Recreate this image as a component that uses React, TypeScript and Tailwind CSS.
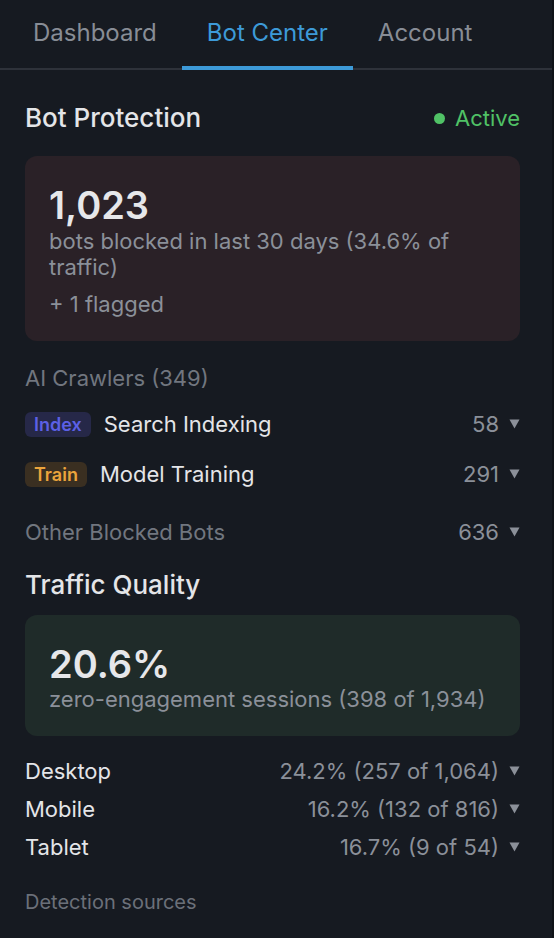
import React from 'react';

const Caret = () => (
  <svg width="11" height="10" viewBox="0 0 11 10" className="ml-[10px] shrink-0">
    <path d="M0.5 0.5h10L5.5 9.5z" fill="#8b9099" />
  </svg>
);

const tabs = ['Dashboard', 'Bot Center', 'Account'];

const crawlers = [
  { badge: 'Index', label: 'Search Indexing', count: 58, tone: 'bg-[#262848] text-[#5c60e6]' },
  { badge: 'Train', label: 'Model Training', count: 291, tone: 'bg-[#3a2f21] text-[#eba43c]' },
];

const devices = [
  { name: 'Desktop', value: '24.2% (257 of 1,064)' },
  { name: 'Mobile', value: '16.2% (132 of 816)' },
  { name: 'Tablet', value: '16.7% (9 of 54)' },
];

export default function App() {
  return (
    <div className="flex min-h-[938px] w-full bg-[#161a21] font-['Inter','Noto_Sans',sans-serif] text-[#e4e5e8]">
      <div className="min-w-0 flex-1">
        {/* Tabs */}
        <nav className="flex h-[70px] border-b-2 border-[#2e323a] pl-2">
          {tabs.map((t) => {
            const active = t === 'Bot Center';
            return (
              <div
                key={t}
                className={`-mb-[2px] flex h-[70px] items-center border-b-4 px-[25px] text-[24px] ${
                  active ? 'border-[#3d9ad8] text-[#3d9ad8]' : 'border-transparent text-[#888d96]'
                }`}
              >
                {t}
              </div>
            );
          })}
        </nav>

        <div className="pl-[25px] pr-[32px]">
          {/* Bot Protection */}
          <div className="mt-[33px] flex h-[30px] items-center justify-between">
            <h2 className="text-[26px] font-medium leading-[30px]">Bot Protection</h2>
            <div className="flex items-center gap-[10px] text-[22px] text-[#50c266]">
              <span className="h-[11px] w-[11px] rounded-full bg-[#50c266]" />
              Active
            </div>
          </div>

          <div className="mt-[23px] rounded-xl bg-[#2a2127] px-6 pb-6 pt-[26px]">
            <div className="text-[38px] font-semibold leading-[46px] text-[#e6e7ea]">1,023</div>
            <p className="text-[22px] leading-[26px] text-[#8b9099]">
              bots blocked in last 30 days (34.6% of traffic)
            </p>
            <p className="mt-[11px] text-[22px] leading-[26px] text-[#8b9099]">+ 1 flagged</p>
          </div>

          {/* AI Crawlers */}
          <div className="mt-6 text-[22px] leading-[26px] text-[#71767f]">AI Crawlers (349)</div>
          <div className="mt-2">
            {crawlers.map((c) => (
              <div key={c.badge} className="flex h-[50px] items-center">
                <span className={`rounded-md px-[9px] text-[18px] font-semibold leading-[25px] ${c.tone}`}>
                  {c.badge}
                </span>
                <span className="ml-[13px] text-[22px] text-[#e4e5e8]">{c.label}</span>
                <span className="ml-auto flex items-center text-[22px] text-[#8b9099]">
                  {c.count}
                  <Caret />
                </span>
              </div>
            ))}
          </div>

          <div className="mt-5 flex h-[26px] items-center justify-between text-[22px] text-[#71767f]">
            <span>Other Blocked Bots</span>
            <span className="flex items-center text-[#8b9099]">
              636
              <Caret />
            </span>
          </div>

          {/* Traffic Quality */}
          <h2 className="mt-[25px] text-[26px] font-medium leading-[30px]">Traffic Quality</h2>

          <div className="mt-[15px] rounded-xl bg-[#1f2b29] px-6 pb-[25px] pt-[26px]">
            <div className="text-[38px] font-semibold leading-[46px] text-[#e6e7ea]">20.6%</div>
            <p className="text-[22px] leading-[24px] text-[#8b9099]">zero-engagement sessions (398 of 1,934)</p>
          </div>

          <div className="mt-4">
            {devices.map((d) => (
              <div key={d.name} className="flex h-[38px] items-center justify-between text-[22px]">
                <span className="text-[#e4e5e8]">{d.name}</span>
                <span className="flex items-center text-[#8b9099]">
                  {d.value}
                  <Caret />
                </span>
              </div>
            ))}
          </div>

          <div className="mt-[23px] text-[20px] leading-[26px] text-[#6b7079]">Detection sources</div>
        </div>
      </div>
      <div className="w-[2px] shrink-0 bg-[#0f1217]" />
    </div>
  );
}
